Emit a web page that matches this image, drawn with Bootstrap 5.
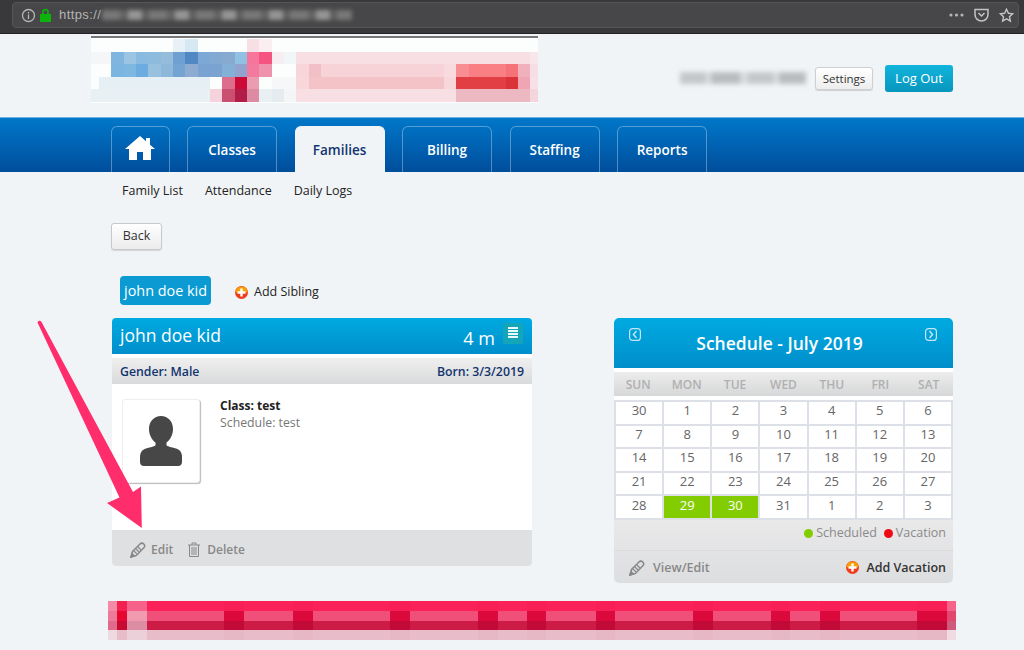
<!DOCTYPE html>
<html lang="en">
<head>
    <meta charset="UTF-8">
    <meta name="viewport" content="width=device-width, initial-scale=1.0">
    <title>Families</title>
    <link rel="stylesheet" href="https://cdn.jsdelivr.net/npm/bootstrap@5.3.0/dist/css/bootstrap.min.css">
    <style>
        html, body { height: 650px; overflow: hidden; }
        body { position: relative; background: #f1f4f6; font-family: "Open Sans", "Noto Sans", sans-serif; font-size: 13px; color: #333; }
        .chrome-bar { height: 34px; background: #39393b; border-bottom: 1px solid #222; padding: 2px 5px 0 12px; }
        .url-box { height: 26px; background: #474749; border: 1px solid #555; border-radius: 4px; padding: 0 4px 0 8px; color: #b4b4b4; font-family: "Liberation Sans", sans-serif; font-size: 13px; letter-spacing: .4px; }
        .url-blur { width: 250px; height: 10px; margin-left: 1px; filter: blur(2px); background: repeating-linear-gradient(90deg, #777 0 18px, #636363 18px 26px, #959595 26px 40px, #5f5f5f 40px 47px); }
        .top-head { height: 83px; }
        .logo-wrap { width: 447px; margin: 2px 0 0 91px; height: 67px; background: #fcfefe; border-top: 2px solid #777; padding-top: 1px; }
        .mosaic-row { display: flex; height: 12.6px; }
        .mosaic-row span { display: block; height: 100%; }
        .user-blur { width: 126px; height: 12px; margin-right: 9px; filter: blur(2.5px); background: repeating-linear-gradient(90deg, #c4c7ca 0 26px, #dcdee0 26px 31px, #b9bcbf 31px 60px, #d8dadc 60px 68px); }
        .btn-settings { width: 58px; height: 23px; padding: 0; font-size: 11.5px; line-height: 21px; color: #333; background: linear-gradient(#fff, #ededed); border: 1px solid #cfcfcf; border-radius: 3px; box-shadow: 0 1px 1px rgba(0,0,0,.15); margin-right: 12px; }
        .btn-logout { width: 68px; height: 27px; padding: 0; font-size: 13px; line-height: 26px; color: #fff; background: linear-gradient(#12b5dc, #0795bd); border: 0; border-radius: 3px; margin-right: 71px; }
        .main-band { height: 55px; padding: 8px 0 0 111px; gap: 17.5px; background: linear-gradient(#0177c9, #004e9c); border-top: 1px solid #6cb2e0; }
        .tab-item { width: 90px; height: 46px; line-height: 47px; text-align: center; color: #fff; font-weight: 600; font-size: 13.5px; border: 1px solid rgba(255,255,255,.32); border-bottom: 0; border-radius: 6px 6px 0 0; text-decoration: none; }
        .tab-home { width: 58.6px; padding-top: 8px; line-height: 1; }
        .tab-on { background: #f1f4f6; color: #12346e; border-color: #f1f4f6; }
        .sub-links { padding: 10px 0 0 122px; gap: 22px; height: 51px; }
        .sub-links a { color: #222; text-decoration: none; font-size: 12.5px; }
        .btn-back { width: 51px; height: 27px; margin-left: 111px; padding: 0; font-size: 12.5px; color: #333; background: linear-gradient(#fff, #ececec); border: 1px solid #c8c8c8; border-radius: 3px; box-shadow: 0 1px 1px rgba(0,0,0,.12); display: block; }
        .kid-row { margin: 26px 0 0 120px; height: 29px; }
        .kid-pill { width: 91px; height: 29px; line-height: 29px; text-align: center; color: #fff; background: #0b9ad2; border-radius: 4px; font-size: 14.4px; white-space: nowrap; }
        .add-link { margin-left: 24px; margin-top: 3px; color: #222; font-size: 12.5px; gap: 6px; }
        .cards-row { margin: 13px 0 0 112px; width: 841px; height: 265px; }
        .kid-card { width: 420px; height: 248px; background: #fff; border-radius: 4px; border: 0; overflow: hidden; }
        .sched-card { width: 339px; height: 265px; background: #fff; border-radius: 5px; border: 0; overflow: hidden; }
        .blue-head { background: linear-gradient(#00aae1, #008ecb); color: #fff; flex-shrink: 0; }
        .kid-head { height: 36px; padding: 0 9px 2px 8px; font-size: 17.5px; }
        .age-text { margin-right: 8px; margin-top: 7px; font-size: 18px; }
        .list-chip { width: 20px; height: 21px; background: #14a6b8; border-radius: 2px; margin-top: -4px; padding: 4px 5px; }
        .list-chip i { display: block; height: 2px; margin-bottom: 1px; background: #e8fbff; }
        .info-bar { margin-top: 4px; height: 26px; padding: 2px 8px 0; background: linear-gradient(#efefef, #d9dadb); color: #12346e; font-weight: 600; font-size: 12.3px; }
        .kid-body { height: 146px; padding: 15px 10px; gap: 20px; }
        .photo-box { width: 78px; height: 84px; background: #fff; border: 1px solid #eee; border-radius: 3px; box-shadow: 1px 1px 1px #bbb; }
        .class-line { font-weight: 700; color: #222; font-size: 12px; line-height: 17px; margin-top: -2px; }
        .sched-line { color: #777; font-size: 12.3px; line-height: 17px; }
        .kid-foot { height: 36px; padding: 3px 18px 0; gap: 15px; background: #dfe0e2; color: #888; font-weight: 600; font-size: 12px; }
        .sched-head { height: 50px; font-size: 17.5px; font-weight: 600; padding: 0 24px 0 16px; }
        .week-row { margin-top: 4px; height: 24px; padding-top: 1px; flex-shrink: 0; background: linear-gradient(#ececec, #d6d7d8); color: #b0b0b0; font-weight: 600; font-size: 12px; }
        .week-row span { width: 48.43px; text-align: center; }
        .day-grid { margin: 4px 0 0; width: 339px; flex-shrink: 0; border-collapse: collapse; table-layout: fixed; }
        .day-grid td { height: 23.6px; padding: 0 0 4px; border: 2px solid #dde0e6; text-align: center; font-size: 13px; color: #666; line-height: 17px; }
        .day-grid td.sched-day { background: #83cc00; color: #fff; }
        .sched-foot { height: 65px; flex-shrink: 0; background: linear-gradient(#e9e9ea, #dcdddf); position: relative; }
        .legend-line { height: 31px; padding: 0 7px 3px 0; gap: 7px; color: #8a8a8a; font-size: 12.5px; border-bottom: 1px dotted #d2d3d4; }
        .dot-mark { display: inline-block; width: 9px; height: 9px; border-radius: 50%; margin-right: 3px; vertical-align: -1px; }
        .action-line { height: 34px; padding: 0 7px 0 15px; font-size: 12.5px; font-weight: 600; color: #888; }
        .vac-link { color: #333; font-weight: 600; gap: 7px; }
        .foot-mosaic { margin: 18px 0 0 108px; width: 848px; }
        .foot-row { display: flex; height: 9.75px; }
        .foot-row span { display: block; height: 100%; }
        .big-arrow { position: absolute; left: 0; top: 0; pointer-events: none; }
    </style>
</head>
<body>
    <div class="chrome-bar">
        <div class="url-box d-flex align-items-center">
            <svg width="15" height="15" viewBox="0 0 15 15" fill="none" stroke="#b5b5b5" stroke-width="1.3"><circle cx="7.5" cy="7.5" r="6"/><path d="M7.5 6.6V11M7.5 4v1.4"/></svg>
            <svg class="ms-1" width="11" height="14" viewBox="0 0 11 14"><path d="M3 6V4a2.5 2.5 0 0 1 5 0v2" fill="none" stroke="#0bb30b" stroke-width="1.6"/><rect x="0" y="6" width="11" height="8" fill="#0bb30b"/></svg>
            <span class="ms-2">https://</span>
            <div class="url-blur"></div>
            <div class="ms-auto d-flex align-items-center" style="gap:10px">
                <svg width="15" height="4" viewBox="0 0 15 4" fill="#b5b5b5"><circle cx="2" cy="2" r="1.6"/><circle cx="7.5" cy="2" r="1.6"/><circle cx="13" cy="2" r="1.6"/></svg>
                <svg width="15" height="14" viewBox="0 0 15 14" fill="none" stroke="#c4c4c4" stroke-width="1.5"><path d="M1 1.5h13v5a6.500 6.500 0 0 1-13 0z"/><path d="M4.500 5l3 3 3-3"/></svg>
                <svg width="15" height="15" viewBox="0 0 15 15" fill="none" stroke="#c4c4c4" stroke-width="1.4"><path d="M7.500 1.300l1.900 4 4.300.5-3.200 3 .9 4.300-3.900-2.200-3.900 2.200.9-4.300-3.200-3 4.300-.5z"/></svg>
            </div>
        </div>
    </div>

    <div class="top-head d-flex align-items-start">
        <div class="logo-wrap" id="logoMosaic"></div>
        <div class="ms-auto d-flex align-items-center" style="height:88px">
            <div class="user-blur"></div>
            <button class="btn btn-settings">Settings</button>
            <button class="btn btn-logout">Log Out</button>
        </div>
    </div>

    <nav class="main-band d-flex">
        <a class="tab-item tab-home" href="#">
            <svg width="30" height="26" viewBox="0 0 30 26" fill="#fff"><path d="M15 1L0 14h4v11h8v-8h6v8h8V14h4l-5-4.300V3h-4v3.200z"/></svg>
        </a>
        <a class="tab-item" href="#">Classes</a>
        <a class="tab-item tab-on" href="#">Families</a>
        <a class="tab-item" href="#">Billing</a>
        <a class="tab-item" href="#">Staffing</a>
        <a class="tab-item" href="#">Reports</a>
    </nav>

    <div class="sub-links d-flex">
        <a href="#">Family List</a>
        <a href="#">Attendance</a>
        <a href="#">Daily Logs</a>
    </div>

    <button class="btn btn-back">Back</button>

    <div class="kid-row d-flex align-items-center">
        <div class="kid-pill">john doe kid</div>
        <div class="add-link d-flex align-items-center">
            <svg width="13" height="13" viewBox="0 0 13 13"><circle cx="6.500" cy="6.500" r="6.500" fill="#ef3b1c"/><path d="M6.500 0.500a6 6 0 0 1 6 6h-12a6 6 0 0 1 6-6z" fill="#f8a000"/><path d="M5.300 2.500h2.400v2.800h2.800v2.400H7.700v2.800H5.300V7.700H2.500V5.300h2.800z" fill="#fff"/></svg>
            <span>Add Sibling</span>
        </div>
    </div>

    <div class="cards-row d-flex justify-content-between align-items-start">
        <div class="card kid-card">
            <div class="blue-head kid-head d-flex align-items-center justify-content-between">
                <span>john doe kid</span>
                <div class="d-flex align-items-center">
                    <span class="age-text">4 m</span>
                    <div class="list-chip"><i></i><i></i><i></i><i></i></div>
                </div>
            </div>
            <div class="info-bar d-flex align-items-center justify-content-between">
                <span>Gender: Male</span>
                <span>Born: 3/3/2019</span>
            </div>
            <div class="kid-body d-flex">
                <div class="photo-box d-flex align-items-center justify-content-center">
                    <svg width="42" height="50" viewBox="0 0 42 50" fill="#474747"><path d="M21 0c7 0 12 5.500 12 13 0 6-3 11-6.500 13.500V29c0 1.500 5 2 9.500 3.500 4 1.300 6 4 6 8.500v5c0 2.500-1.500 4-4 4H4c-2.500 0-4-1.500-4-4v-5c0-4.500 2-7.200 6-8.500C10.500 31 15.500 30.500 15.500 29v-2.500C12 24 9 19 9 13 9 5.500 14 0 21 0z"/></svg>
                </div>
                <div>
                    <div class="class-line">Class: test</div>
                    <div class="sched-line">Schedule: test</div>
                </div>
            </div>
            <div class="kid-foot d-flex align-items-center">
                <span class="d-flex align-items-center" style="gap:5px">
                    <svg width="16" height="16" viewBox="0 0 16 16" fill="none" stroke="#888" stroke-width="1.500"><path d="M1 15l1.600-5.500L10 2c1.200-1.200 2.500-1.200 3.800 0 1.200 1.300 1.200 2.600 0 3.800L6.500 13.400z"/><path d="M4 9l3 3M6 7l3 3M8 5l3 3" stroke-width="1.200"/><path d="M1 15l3.300-1-2.300-2.300z" fill="#888"/></svg>
                    Edit
                </span>
                <span class="d-flex align-items-center" style="gap:7px">
                    <svg width="12" height="15" viewBox="0 0 12 15" fill="none" stroke="#888" stroke-width="1"><path d="M0 3h12M4 3V1h4v2M1.500 3v11.500h9V3M4 5v8M6 5v8M8 5v8"/></svg>
                    Delete
                </span>
            </div>
        </div>

        <div class="card sched-card">
            <div class="blue-head sched-head d-flex align-items-center justify-content-between position-relative">
                <svg class="position-absolute" style="left:15px;top:10px" width="12" height="13" viewBox="0 0 12 13" fill="none" stroke="#bfe7f5" stroke-width="1.200"><rect x=".6" y=".6" width="10.800" height="11.800" rx="3"/><path d="M7.500 3L4.500 6.500l3 3.500" stroke-width="1.500"/></svg>
                <span class="w-100 text-center">Schedule - July 2019</span>
                <svg class="position-absolute" style="right:16px;top:10px" width="12" height="13" viewBox="0 0 12 13" fill="none" stroke="#bfe7f5" stroke-width="1.200"><rect x=".6" y=".6" width="10.800" height="11.800" rx="3"/><path d="M4.500 3l3 3.500-3 3.500" stroke-width="1.500"/></svg>
            </div>
            <div class="week-row d-flex align-items-center">
                <span>SUN</span><span>MON</span><span>TUE</span><span>WED</span><span>THU</span><span>FRI</span><span>SAT</span>
            </div>
            <table class="day-grid" id="dayGrid"></table>
            <div class="sched-foot">
                <div class="legend-line d-flex align-items-center justify-content-end">
                    <span><i class="dot-mark" style="background:#83cc00"></i>Scheduled</span>
                    <span><i class="dot-mark" style="background:#f00a14"></i>Vacation</span>
                </div>
                <div class="action-line d-flex align-items-center justify-content-between">
                    <span class="d-flex align-items-center gap-2">
                        <svg width="16" height="16" viewBox="0 0 16 16" fill="none" stroke="#888" stroke-width="1.500"><path d="M1 15l1.600-5.500L10 2c1.200-1.200 2.500-1.200 3.800 0 1.200 1.300 1.200 2.600 0 3.800L6.500 13.400z"/><path d="M4 9l3 3M6 7l3 3M8 5l3 3" stroke-width="1.200"/><path d="M1 15l3.300-1-2.300-2.300z" fill="#888"/></svg>
                        View/Edit
                    </span>
                    <span class="vac-link d-flex align-items-center">
                        <svg width="13" height="13" viewBox="0 0 13 13"><circle cx="6.500" cy="6.500" r="6.500" fill="#ef3b1c"/><path d="M6.500 0.500a6 6 0 0 1 6 6h-12a6 6 0 0 1 6-6z" fill="#f8a000"/><path d="M5.300 2.500h2.400v2.800h2.800v2.400H7.700v2.800H5.300V7.700H2.500V5.300h2.800z" fill="#fff"/></svg>
                        Add Vacation
                    </span>
                </div>
            </div>
        </div>
    </div>

    <div class="foot-mosaic" id="footMosaic"></div>

    <svg class="big-arrow" width="200" height="560" viewBox="0 0 200 560">
        <path d="M37.500 322.500c.6-2 3-2.300 4-.5L133 492l8-5.500.8 41.500-34.800-25 12.500-5.500z" fill="#ff2d6c"/>
    </svg>

    <script>
        // logo placeholder, colours per cell: [first col, last col, colour]
        const logoRows = [
            [[7,7,"#e8f1f6"],[8,8,"#d6e8f2"],[13,13,"#f8dfe6"],[14,14,"#fbeef0"]],
            [[0,1,"#f5f6f8"],[2,2,"#7fb5de"],[3,3,"#9cc5e3"],[4,4,"#88bbdf"],[5,5,"#8cbbdd"],[6,6,"#96bcdc"],[7,7,"#6ea1d1"],[8,8,"#5188c4"],[9,9,"#7ba8d4"],[10,10,"#81a9d2"],[11,11,"#87abd0"],[12,12,"#90c0e3"],[13,13,"#f7759b"],[14,14,"#f4547f"],[15,15,"#f6eef0"],[16,16,"#f1f6f8"],[17,35,"#f7dfe3"],[36,36,"#f8e6ea"]],
            [[2,2,"#7ab6e0"],[3,3,"#7eb8e0"],[4,4,"#6cace0"],[5,5,"#98c1e0"],[6,6,"#8db8da"],[7,7,"#74a4d2"],[8,8,"#8eabd2"],[9,10,"#7ba3d2"],[11,11,"#84b0d8"],[12,12,"#92a3cf"],[13,13,"#f4799e"],[14,14,"#ef92ae"],[17,17,"#f8d5d9"],[18,18,"#f1bfc5"],[19,28,"#f7d2d6"],[29,29,"#f8dbde"],[30,30,"#f88d92"],[31,33,"#f97f84"],[34,34,"#f57378"],[35,35,"#f0b0bc"],[36,36,"#f6dfe4"]],
            [[1,9,"#e6eff4"],[11,11,"#dc6d8d"],[12,12,"#cd0a35"],[13,13,"#ec9cb0"],[15,16,"#f6f7f8"],[17,17,"#f8d7da"],[18,28,"#f3c3c8"],[29,29,"#f8d7da"],[30,33,"#e23f44"],[34,34,"#da3236"],[35,35,"#efa5b3"],[36,36,"#f7e1e6"]],
            [[0,9,"#e9f0f4"],[10,10,"#f4d3dc"],[11,11,"#cb4f70"],[12,12,"#b21d48"],[13,13,"#dc8ba3"],[14,14,"#e9f0f3"],[15,15,"#e5ebee"],[16,16,"#f4f5f7"],[17,29,"#f7dfe3"],[30,35,"#ecb9c3"],[36,36,"#f3d5dc"]]
        ];
        const logoEl = document.getElementById("logoMosaic");
        logoRows.forEach((cells) => {
            const row = document.createElement("div");
            row.className = "mosaic-row";
            for (let c = 0; c <= 36; c++) {
                const hit = cells.find((x) => c >= x[0] && c <= x[1]);
                const w = c === 0 ? 8 : (c === 36 ? 7.4 : 12.4);
                row.innerHTML += `<span style="width:${w}px;background:${hit ? hit[2] : "#fcfefe"}"></span>`;
            }
            logoEl.appendChild(row);
        });

        // footer placeholder band: 4 rows of [width, colour]
        const darkAt = [[224,20],[293,20],[390,20],[478,20],[527,19],[596,19],[693,20],[771,19],[820,20],[917,30]];
        const footEl = document.getElementById("footMosaic");
        function footRow(edgeA, edgeB, edgeC, base, dark, last) {
            const segs = [[9, edgeA], [10, edgeB], [20, edgeC]];
            let x = 147;
            darkAt.forEach((d) => {
                segs.push([d[0] - x, base], [d[1], dark]);
                x = d[0] + d[1];
            });
            segs.push([956 - 9 - x, base], [9, last]);
            const row = document.createElement("div");
            row.className = "foot-row";
            row.innerHTML = segs.map((s) => `<span style="width:${s[0]}px;background:${s[1]}"></span>`).join("");
            footEl.appendChild(row);
        }
        footRow("#f48aa6", "#f2214f", "#f7628a", "#fb2259", "#f81f56", "#f7628a");
        footRow("#ee7a99", "#e8052f", "#f29ab0", "#f04f7a", "#dc0a3c", "#e2486e");
        footRow("#e06a8a", "#c80a32", "#dc8da4", "#cc1c45", "#c20a38", "#cf5a7c");
        footRow("#efd9e0", "#e8bcc9", "#ecd0d9", "#e8bcc9", "#e6b8c5", "#f0dbe2");

        // calendar
        const days = [
            [30,1,2,3,4,5,6],
            [7,8,9,10,11,12,13],
            [14,15,16,17,18,19,20],
            [21,22,23,24,25,26,27],
            [28,29,30,31,1,2,3]
        ];
        document.getElementById("dayGrid").innerHTML = days.map((w, i) =>
            "<tr>" + w.map((d, j) => `<td class="${i === 4 && (j === 1 || j === 2) ? "sched-day" : ""}">${d}</td>`).join("") + "</tr>"
        ).join("");
    </script>
    <script src="https://cdn.jsdelivr.net/npm/bootstrap@5.3.0/dist/js/bootstrap.bundle.min.js"></script>
</body>
</html>
